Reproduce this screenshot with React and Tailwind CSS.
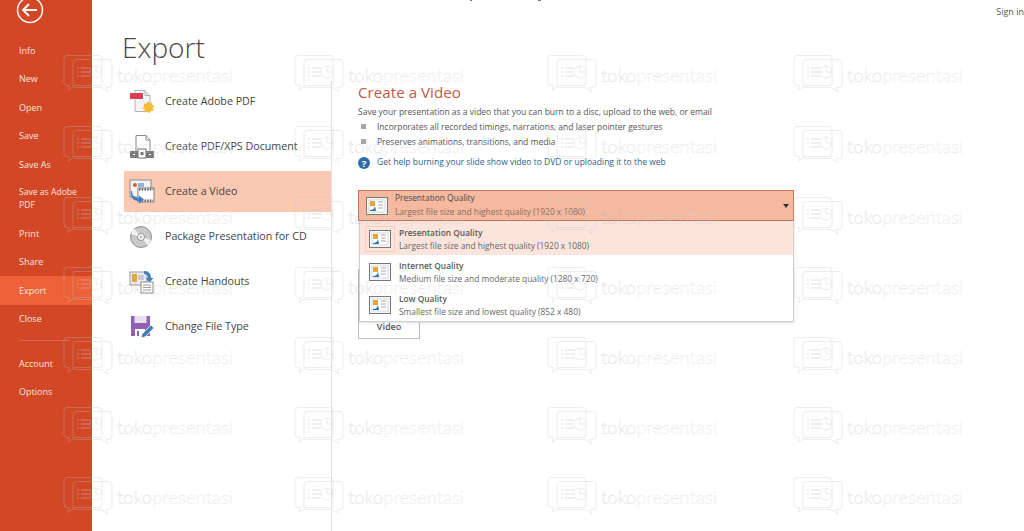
const font = { fontFamily: '"Open Sans", "Noto Sans", sans-serif' };

const menuTop = ['Info', 'New', 'Open', 'Save', 'Save As'];
const menuMid = ['Print', 'Share', 'Export', 'Close'];
const menuEnd = ['Account', 'Options'];

const wmCols = [63, 294, 547, 793];
const wmRows = [55, 126, 197, 267, 337, 407, 477];

function Watermark({ x, y }) {
  return (
    <div className="absolute flex items-start" style={{ left: x, top: y }}>
      <svg width="52" height="38" viewBox="0 0 52 38" fill="none" stroke="#c4c4c4" strokeWidth="0.6">
        <path d="M4 0.5h32a3 3 0 0 1 3 3v24a3 3 0 0 1-3 3H12l-7 5 1.5-5H4a3 3 0 0 1-3-3v-24a3 3 0 0 1 3-3z" />
        <path d="M13 4.500h33a3 3 0 0 1 3 3v22a3 3 0 0 1-3 3h-3l2 4.500-7-4.500H13a3 3 0 0 1-3-3v-22a3 3 0 0 1 3-3z" />
        <path d="M14 13h2M18 13h9M14 17h2M18 17h9M14 21h2M18 21h9" strokeWidth="1" />
        <circle cx="33" cy="17" r="6" />
        <path d="M33 17h6M33 17v-6" />
      </svg>
      <span
        className="ml-[2px] mt-[8px] text-[18.500px] leading-[24px] font-light text-transparent"
        style={{ fontFamily: 'Lato, sans-serif' }}
      >
        <span className="[-webkit-text-stroke:0.35px_#bdbdbd]">toko</span>
        <span className="[-webkit-text-stroke:0.35px_#d6d6d6]">presentasi</span>
      </span>
    </div>
  );
}

function PdfIcon() {
  return (
    <svg width="26" height="26" viewBox="0 0 26 26">
      <path d="M6 1.500h10l5 5v16H6z" fill="#f4f4f4" stroke="#b5b5b5" />
      <path d="M16 1.500v5h5" fill="#e4e4e4" stroke="#b5b5b5" />
      <rect x="1" y="4" width="13" height="6" fill="#dd3f52" />
      <path d="M19 12l1.500 2.200 2.500-.7.300 2.500 2.200 1.300-1.700 2 .8 2.500-2.600.3-1.500 2.200-2.100-1.500-2.500.6-.3-2.600-2-1.500 1.700-2-.6-2.500 2.600-.2z" fill="#f2bd3b" />
    </svg>
  );
}

function XpsIcon() {
  return (
    <svg width="26" height="26" viewBox="0 0 26 26">
      <path d="M7 1.500h10l4 4.500v12H7z" fill="#fff" stroke="#8c8c8c" />
      <path d="M17 1.500v4.500h4" fill="none" stroke="#8c8c8c" />
      <rect x="1" y="17" width="24" height="7" fill="#7a7a7a" />
      <rect x="9" y="15" width="8" height="9" fill="#fff" stroke="#6f6f6f" />
      <rect x="11.500" y="18" width="3" height="3" fill="#6f6f6f" />
      <path d="M4 20.500h2M20 20.500h2" stroke="#fff" />
    </svg>
  );
}

function VideoIcon() {
  return (
    <svg width="26" height="26" viewBox="0 0 26 26">
      <rect x="1" y="1" width="21" height="17" fill="#f3f3f3" stroke="#8c8c8c" />
      <circle cx="6" cy="6" r="2" fill="#d8602f" />
      <rect x="9" y="4" width="6" height="4" fill="#8fb6d8" />
      <rect x="9" y="9" width="16" height="14" fill="#fff" stroke="#7d7d7d" />
      <path d="M10 10.500h14M10 21.500h14" stroke="#555" strokeWidth="1.800" strokeDasharray="1.500 1.200" />
      <path d="M3 12c0 5 3 7 7 7v-2.500l5 4-5 4V22c-5 0-9-3-8-10z" fill="#3f7fc0" />
    </svg>
  );
}

function CdIcon() {
  return (
    <svg width="24" height="24" viewBox="0 0 24 24">
      <circle cx="12" cy="12" r="10.500" fill="#c9c9c9" stroke="#8f8f8f" />
      <path d="M12 12L5 3.500A10.500 10.500 0 0 0 2 9zM12 12l7 8.500A10.500 10.500 0 0 0 22 15z" fill="#f2f2f2" />
      <circle cx="12" cy="12" r="3.500" fill="#fff" stroke="#8f8f8f" />
      <circle cx="12" cy="12" r="1.500" fill="#bdbdbd" />
    </svg>
  );
}

function HandoutIcon() {
  return (
    <svg width="26" height="24" viewBox="0 0 26 24">
      <rect x="1" y="2" width="17" height="13" fill="#ececec" stroke="#9a9a9a" />
      <rect x="3" y="4" width="5" height="8" fill="#e1a640" />
      <rect x="9" y="5" width="6" height="5" fill="#c9c9c9" />
      <path d="M15 1c5 0 7 3 7 7h2.500l-4 4.500-4-4.500H19c0-2.500-2-4-4-4z" fill="#3f7fc0" />
      <rect x="12" y="12" width="12" height="11" fill="#fff" stroke="#8a8a8a" />
      <path d="M14 15h8M14 17.500h8M14 20h8" stroke="#9a9a9a" />
    </svg>
  );
}

function SaveTypeIcon() {
  return (
    <svg width="26" height="26" viewBox="0 0 26 26">
      <rect x="2" y="2" width="19" height="20" fill="#9062b3" />
      <rect x="5.500" y="2" width="12" height="7" fill="#e9dff1" />
      <rect x="6" y="15" width="10" height="7" fill="#ffffff" />
      <rect x="8" y="17" width="2" height="5" fill="#9062b3" />
      <path d="M12 24l1-4 9-9 3 3-9 9z" fill="#3f7fc0" stroke="#fff" strokeWidth="0.800" />
    </svg>
  );
}

function QualityIcon() {
  return (
    <svg width="22" height="18" viewBox="0 0 22 18">
      <rect x="0.500" y="0.500" width="21" height="17" fill="#f7f7f7" stroke="#777" />
      <rect x="3" y="3" width="16" height="12" fill="#fff" stroke="#b8c7d8" strokeWidth="0.600" />
      <rect x="4" y="4" width="5" height="5" fill="#e2a63d" />
      <path d="M4 13c3 0 4-1 5-4l1 5H4z" fill="#2f6fb2" />
      <path d="M12 5h5M12 8h5M12 11h5" stroke="#a8a8a8" />
    </svg>
  );
}

function MenuItem({ label, active }) {
  return (
    <div className={`h-[28.5px] flex items-center pl-[19px] text-[9px] text-[#fbe6dd] ${active ? 'bg-[#ee6038]' : ''}`}>
      {label}
    </div>
  );
}

function ExportItem({ icon, label, active }) {
  return (
    <div className={`h-[41px] mb-[4px] flex items-center text-[10.700px] text-[#444444] ${active ? 'bg-[#fbc9b2]' : ''}`}>
      <div className="w-[41px] pl-[5px] flex items-center">{icon}</div>
      {label}
    </div>
  );
}

function QualityRow({ title, sub, active, heightClass }) {
  return (
    <div className={`flex items-center ${heightClass} ${active ? 'bg-[#fbe4db]' : ''}`}>
      <div className="w-[39px] flex justify-center">
        <div className={`p-[3px] ${active ? 'border border-[#f6cdbc]' : 'border border-transparent'}`}>
          <QualityIcon />
        </div>
      </div>
      <div className="leading-[13px]">
        <div className="text-[8.400px] font-semibold text-[#5a5a5a]">{title}</div>
        <div className="text-[8.400px] text-[#666666]">{sub}</div>
      </div>
    </div>
  );
}

export default function App() {
  return (
    <div className="relative flex h-[531px] w-[1024px] overflow-hidden bg-white" style={font}>
      {/* backstage menu */}
      <aside className="w-[92px] shrink-0 bg-[#d24726]">
        <svg width="92" height="36" viewBox="0 0 92 36" className="block">
          <circle cx="30" cy="10" r="12.500" fill="none" stroke="#ffffff" strokeWidth="1.500" />
          <path d="M23 10h14M29 4l-6 6 6 6" fill="none" stroke="#ffffff" strokeWidth="1.800" />
        </svg>
        {menuTop.map((m) => (
          <MenuItem key={m} label={m} />
        ))}
        <div className="h-[40.5px] flex items-center pl-[19px] text-[8.600px] leading-[13px] text-[#fbe6dd]">
          Save as Adobe
          <br />
          PDF
        </div>
        {menuMid.map((m) => (
          <MenuItem key={m} label={m} active={m === 'Export'} />
        ))}
        <div className="h-[16px] pt-[7px] pl-[19px] pr-[22px]">
          <div className="h-px bg-[#dc6b4e]" />
        </div>
        {menuEnd.map((m) => (
          <MenuItem key={m} label={m} />
        ))}
      </aside>

      {/* export options */}
      <section className="w-[240px] shrink-0 flex flex-col">
        <h1 className="h-[81px] pl-[30px] pt-[27px] text-[28px] leading-[40px] font-light text-[#4a4a4a]">Export</h1>
        <div className="ml-[32px] flex-1 border-r border-[#e3e3e3]">
          <ExportItem icon={<PdfIcon />} label="Create Adobe PDF" />
          <ExportItem icon={<XpsIcon />} label="Create PDF/XPS Document" />
          <ExportItem icon={<VideoIcon />} label="Create a Video" active />
          <ExportItem icon={<CdIcon />} label="Package Presentation for CD" />
          <ExportItem icon={<HandoutIcon />} label="Create Handouts" />
          <ExportItem icon={<SaveTypeIcon />} label="Change File Type" />
        </div>
      </section>

      {/* create a video panel */}
      <section className="flex-1 flex flex-col">
        <div className="h-[82px] pt-[5px] text-right text-[9px] leading-[14px] text-[#555555]">Sign in</div>
        <div className="pl-[26px] w-[462px]">
          <h2 className="text-[15.200px] leading-[20px] text-[#bf5a42]">Create a Video</h2>
          <p className="mt-[2px] text-[8.500px] leading-[15px] text-[#555555]">
            Save your presentation as a video that you can burn to a disc, upload to the web, or email
          </p>
          <ul className="text-[8.500px] leading-[15px] text-[#555555]">
            <li className="flex items-center">
              <span className="ml-[3px] mr-[11px] h-[5px] w-[5px] bg-[#a6a6a6]" />
              Incorporates all recorded timings, narrations, and laser pointer gestures
            </li>
            <li className="flex items-center">
              <span className="ml-[3px] mr-[11px] h-[5px] w-[5px] bg-[#a6a6a6]" />
              Preserves animations, transitions, and media
            </li>
          </ul>
          <div className="mt-[6px] flex h-[15px] items-center text-[8.500px] text-[#2b5f8a]">
            <svg width="12" height="12" viewBox="0 0 12 12" className="mr-[7px]">
              <circle cx="6" cy="6" r="6" fill="#2f6ea8" />
              <text x="6" y="9.500" textAnchor="middle" fontSize="9.500" fontWeight="700" fill="#ffffff">?</text>
            </svg>
            Get help burning your slide show video to DVD or uploading it to the web
          </div>

          <div className="relative mt-[20px]">
            <div className="flex h-[31px] items-center border border-[#c8745a] bg-[#f5b9a0]">
              <div className="flex w-[36px] justify-center">
                <QualityIcon />
              </div>
              <div className="flex-1 pb-[2px] leading-[14px]">
                <div className="text-[8.400px] text-[#4a4a4a]">Presentation Quality</div>
                <div className="text-[8.400px] text-[#8c6c5c]">Largest file size and highest quality (1920 x 1080)</div>
              </div>
              <svg width="6" height="4" viewBox="0 0 6 4" className="mr-[4px]">
                <path d="M0 0h6L3 4z" fill="#333333" />
              </svg>
            </div>
            {/* open dropdown list */}
            <div className="absolute left-px right-0 top-[31px] h-[101px] border-b border-r border-l border-[#cfcfcf] bg-white shadow-sm">
              <QualityRow
                title="Presentation Quality"
                sub="Largest file size and highest quality (1920 x 1080)"
                active
                heightClass="h-[34px] pt-[2px] mb-[2px]"
              />
              <QualityRow
                title="Internet Quality"
                sub="Medium file size and moderate quality (1280 x 720)"
                heightClass="h-[29px] mb-[4px]"
              />
              <QualityRow
                title="Low Quality"
                sub="Smallest file size and lowest quality (852 x 480)"
                heightClass="h-[29px]"
              />
            </div>
          </div>

          <div className="mt-[48px] flex h-[70px] w-[62px] items-end justify-center border border-[#bdbdbd] pb-[5px] text-[9px] font-semibold text-[#555555]">
            Video
          </div>
        </div>
      </section>

      {/* clipped window title */}
      <div className="absolute left-[470px] top-0 h-px w-[2px] bg-[#777777]" />
      <div className="absolute left-[538px] top-0 h-px w-[3px] bg-[#777777]" />

      {/* watermark over everything */}
      <div className="pointer-events-none absolute inset-0 opacity-50">
        {wmRows.map((y) => wmCols.map((x) => <Watermark key={`${x}-${y}`} x={x} y={y} />))}
      </div>
    </div>
  );
}
